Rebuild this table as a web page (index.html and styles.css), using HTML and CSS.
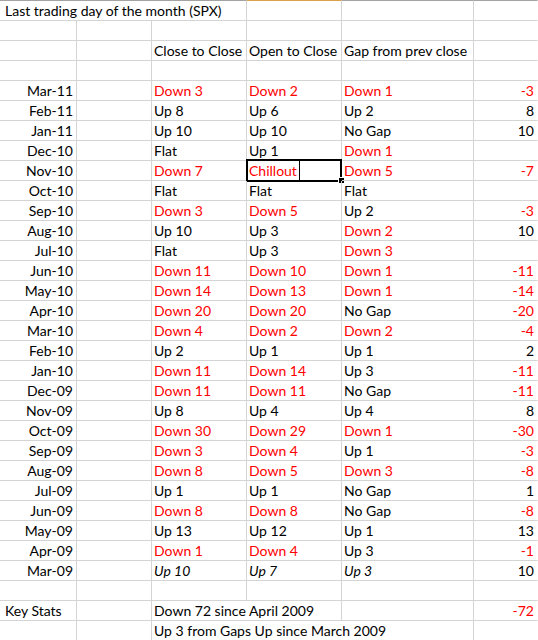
FILE: index.html
```html
<!DOCTYPE html>
<html>
<head>
<meta charset="utf-8">
<link rel="stylesheet" href="styles.css">
</head>
<body>
<div class="sheet">
  <div class="c top a span3">Last trading day of the month (SPX)</div>
  <div class="c top sel-col"></div>
  <div class="c top"></div>
  <div class="c top f"></div>

  <div class="c"></div><div class="c"></div><div class="c"></div><div class="c"></div><div class="c"></div><div class="c f"></div>

  <div class="c"></div><div class="c"></div>
  <div class="c">Close to Close</div>
  <div class="c">Open to Close</div>
  <div class="c">Gap from prev close</div>
  <div class="c f"></div>

  <div class="c"></div><div class="c"></div><div class="c"></div><div class="c"></div><div class="c"></div><div class="c f"></div>

  <div class="c a r">Mar-11</div><div class="c"></div><div class="c red">Down 3</div><div class="c red">Down 2</div><div class="c red">Down 1</div><div class="c f r red">-3</div>
  <div class="c a r">Feb-11</div><div class="c"></div><div class="c">Up 8</div><div class="c">Up 6</div><div class="c">Up 2</div><div class="c f r">8</div>
  <div class="c a r">Jan-11</div><div class="c"></div><div class="c">Up 10</div><div class="c">Up 10</div><div class="c">No Gap</div><div class="c f r">10</div>
  <div class="c a r">Dec-10</div><div class="c"></div><div class="c">Flat</div><div class="c">Up 1</div><div class="c red">Down 1</div><div class="c f r"></div>
  <div class="c a r">Nov-10</div><div class="c"></div><div class="c red">Down 7</div><div class="c red active">Chillout<span class="caret"></span><span class="frame"></span><span class="handle"></span></div><div class="c red">Down 5</div><div class="c f r red">-7</div>
  <div class="c a r">Oct-10</div><div class="c"></div><div class="c">Flat</div><div class="c">Flat</div><div class="c">Flat</div><div class="c f r"></div>
  <div class="c a r">Sep-10</div><div class="c"></div><div class="c red">Down 3</div><div class="c red">Down 5</div><div class="c">Up 2</div><div class="c f r red">-3</div>
  <div class="c a r">Aug-10</div><div class="c"></div><div class="c">Up 10</div><div class="c">Up 3</div><div class="c red">Down 2</div><div class="c f r">10</div>
  <div class="c a r">Jul-10</div><div class="c"></div><div class="c">Flat</div><div class="c">Up 3</div><div class="c red">Down 3</div><div class="c f r"></div>
  <div class="c a r">Jun-10</div><div class="c"></div><div class="c red">Down 11</div><div class="c red">Down 10</div><div class="c red">Down 1</div><div class="c f r red">-11</div>
  <div class="c a r">May-10</div><div class="c"></div><div class="c red">Down 14</div><div class="c red">Down 13</div><div class="c red">Down 1</div><div class="c f r red">-14</div>
  <div class="c a r">Apr-10</div><div class="c"></div><div class="c red">Down 20</div><div class="c red">Down 20</div><div class="c">No Gap</div><div class="c f r red">-20</div>
  <div class="c a r">Mar-10</div><div class="c"></div><div class="c red">Down 4</div><div class="c red">Down 2</div><div class="c red">Down 2</div><div class="c f r red">-4</div>
  <div class="c a r">Feb-10</div><div class="c"></div><div class="c">Up 2</div><div class="c">Up 1</div><div class="c">Up 1</div><div class="c f r">2</div>
  <div class="c a r">Jan-10</div><div class="c"></div><div class="c red">Down 11</div><div class="c red">Down 14</div><div class="c">Up 3</div><div class="c f r red">-11</div>
  <div class="c a r">Dec-09</div><div class="c"></div><div class="c red">Down 11</div><div class="c red">Down 11</div><div class="c">No Gap</div><div class="c f r red">-11</div>
  <div class="c a r">Nov-09</div><div class="c"></div><div class="c">Up 8</div><div class="c">Up 4</div><div class="c">Up 4</div><div class="c f r">8</div>
  <div class="c a r">Oct-09</div><div class="c"></div><div class="c red">Down 30</div><div class="c red">Down 29</div><div class="c red">Down 1</div><div class="c f r red">-30</div>
  <div class="c a r">Sep-09</div><div class="c"></div><div class="c red">Down 3</div><div class="c red">Down 4</div><div class="c">Up 1</div><div class="c f r red">-3</div>
  <div class="c a r">Aug-09</div><div class="c"></div><div class="c red">Down 8</div><div class="c red">Down 5</div><div class="c red">Down 3</div><div class="c f r red">-8</div>
  <div class="c a r">Jul-09</div><div class="c"></div><div class="c">Up 1</div><div class="c">Up 1</div><div class="c">No Gap</div><div class="c f r">1</div>
  <div class="c a r">Jun-09</div><div class="c"></div><div class="c red">Down 8</div><div class="c red">Down 8</div><div class="c">No Gap</div><div class="c f r red">-8</div>
  <div class="c a r">May-09</div><div class="c"></div><div class="c">Up 13</div><div class="c">Up 12</div><div class="c">Up 1</div><div class="c f r">13</div>
  <div class="c a r">Apr-09</div><div class="c"></div><div class="c red">Down 1</div><div class="c red">Down 4</div><div class="c">Up 3</div><div class="c f r red">-1</div>
  <div class="c a r">Mar-09</div><div class="c"></div><div class="c it">Up 10</div><div class="c it">Up 7</div><div class="c it">Up 3</div><div class="c f r">10</div>

  <div class="c"></div><div class="c"></div><div class="c"></div><div class="c"></div><div class="c"></div><div class="c f"></div>

  <div class="c a">Key Stats</div><div class="c"></div><div class="c span2">Down 72 since April 2009</div><div class="c"></div><div class="c f r red">-72</div>
  <div class="c"></div><div class="c"></div><div class="c span3">Up 3 from Gaps Up since March 2009</div><div class="c f"></div>
</div>
</body>
</html>
```

FILE: styles.css
```css
html, body {
  margin: 0;
  padding: 0;
  background: #ffffff;
}

.sheet {
  display: grid;
  grid-template-columns: 77px 75px 95px 95px 132px 64px;
  grid-template-rows: 21px;
  grid-auto-rows: 20px;
  width: 538px;
  height: 640px;
  overflow: hidden;
  font-family: "Lato", "Liberation Sans", sans-serif;
  font-size: 14px;
  color: #000000;
}

.c {
  box-sizing: border-box;
  height: 20px;
  border-right: 1px solid #d4d4d4;
  border-bottom: 1px solid #d4d4d4;
  padding: 1px 3px 0 2px;
  line-height: 18px;
  white-space: nowrap;
  position: relative;
}

.c.f {
  border-right-color: transparent;
}

.c.top {
  height: 21px;
  border-top: 1px solid #a3a3a3;
}

.c.sel-col {
  border-top-color: #dca04a;
}

.a {
  padding-left: 5px;
}

.r {
  text-align: right;
  padding-right: 3px;
}

.red {
  color: #ff0000;
}

.it {
  font-style: italic;
}

.span2 {
  grid-column: span 2;
}

.span3 {
  grid-column: span 3;
}

.caret {
  display: inline-block;
  width: 1px;
  height: 19px;
  background: #000000;
  margin-left: 2px;
  vertical-align: top;
  margin-top: -1px;
}

.frame {
  position: absolute;
  left: -1px;
  top: -2px;
  width: 96px;
  height: 23px;
  box-sizing: border-box;
  border: 2px solid #000000;
  pointer-events: none;
}

.handle {
  position: absolute;
  right: -3px;
  bottom: -3px;
  width: 5px;
  height: 5px;
  background: #000000;
  outline: 1px solid #ffffff;
}
```
